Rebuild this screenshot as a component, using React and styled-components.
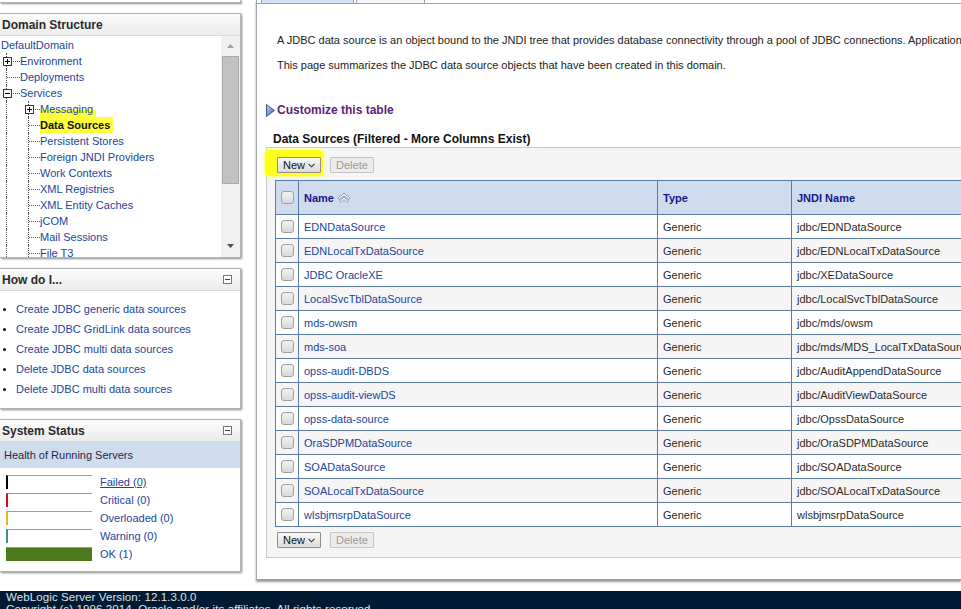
import React from 'react';
import styled, { createGlobalStyle } from 'styled-components';

const GlobalStyle = createGlobalStyle`
  html, body {
    margin: 0;
    padding: 0;
    background: #ffffff;
  }
  body {
    font-family: "Liberation Sans", Arial, sans-serif;
    font-size: 11px;
    color: #222;
  }
`;

// DATA //
const treeItems = [
  { label: 'DefaultDomain', level: 0 },
  { label: 'Environment', level: 1, toggle: '+' },
  { label: 'Deployments', level: 1 },
  { label: 'Services', level: 1, toggle: '-' },
  { label: 'Messaging', level: 2, toggle: '+', mark: 'low' },
  { label: 'Data Sources', level: 2, selected: true },
  { label: 'Persistent Stores', level: 2 },
  { label: 'Foreign JNDI Providers', level: 2 },
  { label: 'Work Contexts', level: 2 },
  { label: 'XML Registries', level: 2 },
  { label: 'XML Entity Caches', level: 2 },
  { label: 'jCOM', level: 2 },
  { label: 'Mail Sessions', level: 2 },
  { label: 'File T3', level: 2 },
];

const howItems = [
  'Create JDBC generic data sources',
  'Create JDBC GridLink data sources',
  'Create JDBC multi data sources',
  'Delete JDBC data sources',
  'Delete JDBC multi data sources',
];

const health = [
  { label: 'Failed (0)', color: '#000000', underline: true },
  { label: 'Critical (0)', color: '#d01010' },
  { label: 'Overloaded (0)', color: '#f0b020' },
  { label: 'Warning (0)', color: '#3a8aa0' },
  { label: 'OK (1)', color: '#4e7a1e', full: true },
];

const sources = [
  ['EDNDataSource', 'jdbc/EDNDataSource'],
  ['EDNLocalTxDataSource', 'jdbc/EDNLocalTxDataSource'],
  ['JDBC OracleXE', 'jdbc/XEDataSource'],
  ['LocalSvcTblDataSource', 'jdbc/LocalSvcTblDataSource'],
  ['mds-owsm', 'jdbc/mds/owsm'],
  ['mds-soa', 'jdbc/mds/MDS_LocalTxDataSource'],
  ['opss-audit-DBDS', 'jdbc/AuditAppendDataSource'],
  ['opss-audit-viewDS', 'jdbc/AuditViewDataSource'],
  ['opss-data-source', 'jdbc/OpssDataSource'],
  ['OraSDPMDataSource', 'jdbc/OraSDPMDataSource'],
  ['SOADataSource', 'jdbc/SOADataSource'],
  ['SOALocalTxDataSource', 'jdbc/SOALocalTxDataSource'],
  ['wlsbjmsrpDataSource', 'wlsbjmsrpDataSource'],
];

// ICONS //
const ToggleIcon = ({ sign }) => (
  <svg width="9" height="9" viewBox="0 0 9 9">
    <rect x="0.5" y="0.5" width="8" height="8" fill="#fff" stroke="#333" />
    <line x1="2" y1="4.5" x2="7" y2="4.5" stroke="#000" />
    {sign === '+' && <line x1="4.5" y1="2" x2="4.5" y2="7" stroke="#000" />}
  </svg>
);

const CollapseIcon = () => (
  <svg width="9" height="9" viewBox="0 0 9 9">
    <rect x="0.5" y="0.5" width="8" height="8" fill="#fff" stroke="#777" />
    <line x1="2" y1="4.5" x2="7" y2="4.5" stroke="#444" />
  </svg>
);

const SortIcon = () => (
  <svg width="14" height="11" viewBox="0 0 14 11">
    <polygon points="1,6 7,1 13,6 11.5,7.5 7,3.5 2.5,7.5" fill="#eef2fa" stroke="#7a8cb0" strokeWidth="0.8" />
    <polygon points="2.5,9 7,5 11.5,9 10,10.3 7,7.6 4,10.3" fill="#eef2fa" stroke="#7a8cb0" strokeWidth="0.8" />
  </svg>
);

const CustomizeIcon = () => (
  <svg width="9" height="13" viewBox="0 0 9 13">
    <defs>
      <linearGradient id="tri" x1="0" y1="0" x2="1" y2="1">
        <stop offset="0" stopColor="#c8d8f4" />
        <stop offset="1" stopColor="#2f5aa8" />
      </linearGradient>
    </defs>
    <polygon points="0.5,0.5 8.5,6.5 0.5,12.5" fill="url(#tri)" stroke="#3a5a9a" />
  </svg>
);

const Caret = () => (
  <svg width="7" height="5" viewBox="0 0 7 5">
    <polyline points="0.5,0.8 3.5,3.8 6.5,0.8" fill="none" stroke="#333" strokeWidth="1.1" />
  </svg>
);

const ArrowIcon = ({ up }) => (
  <svg width="7" height="4" viewBox="0 0 7 4">
    <polygon points={up ? '0,4 3.5,0 7,4' : '0,0 3.5,4 7,0'} fill={up ? '#a0a0a0' : '#505050'} />
  </svg>
);

// COMPONENTS //
const TreeRow = ({ item }) => (
  <Row>
    {item.level === 2 && <Guide />}
    {item.level > 0 && (
      <Connector $level={item.level}>
        {item.toggle && (
          <ToggleBox>
            <ToggleIcon sign={item.toggle} />
          </ToggleBox>
        )}
      </Connector>
    )}
    <TreeLabel $selected={item.selected} $mark={item.mark} $root={item.level === 0}>
      {item.label}
    </TreeLabel>
  </Row>
);

const NewButton = () => (
  <Button>
    New <Caret />
  </Button>
);

const App = () => {
  return (
    <Page>
      <GlobalStyle />
      <Body>
        <SideColumn>
          <StubPanel />

          <Panel>
            <PanelHeader>Domain Structure</PanelHeader>
            <TreeArea>
              <Tree>
                {treeItems.map((item) => (
                  <TreeRow key={item.label} item={item} />
                ))}
              </Tree>
              <ScrollBar>
                <ScrollArrow>
                  <ArrowIcon up />
                </ScrollArrow>
                <ScrollThumb />
                <ScrollSpacer />
                <ScrollArrow>
                  <ArrowIcon />
                </ScrollArrow>
              </ScrollBar>
            </TreeArea>
          </Panel>

          <Panel>
            <PanelHeader>
              How do I...
              <CollapseIcon />
            </PanelHeader>
            <HowList>
              {howItems.map((text) => (
                <HowItem key={text}>
                  <Link>{text}</Link>
                </HowItem>
              ))}
            </HowList>
          </Panel>

          <Panel>
            <PanelHeader>
              System Status
              <CollapseIcon />
            </PanelHeader>
            <HealthBand>Health of Running Servers</HealthBand>
            <HealthList>
              {health.map((h) => (
                <HealthRow key={h.label}>
                  <HealthBar $color={h.color} $full={h.full} />
                  <HealthLabel $underline={h.underline}>{h.label}</HealthLabel>
                </HealthRow>
              ))}
            </HealthList>
          </Panel>
        </SideColumn>

        <MainPanel>
          <TabStrip>
            <Tab $active />
            <Tab />
          </TabStrip>

          <MainContent>
            <Intro>
              A JDBC data source is an object bound to the JNDI tree that provides database connectivity through a pool of JDBC connections. Applications can look up a data source on the JNDI tree and then borrow a database connection from a data source.
            </Intro>
            <Intro $second>
              This page summarizes the JDBC data source objects that have been created in this domain.
            </Intro>

            <Customize>
              <CustomizeIcon />
              Customize this table
            </Customize>

            <TableTitle>Data Sources (Filtered - More Columns Exist)</TableTitle>

            <TableBox>
              <Toolbar>
                <Marker>
                  <NewButton />
                </Marker>
                <Button disabled>Delete</Button>
              </Toolbar>

              <Table>
                <colgroup>
                  <col style={{ width: 23 }} />
                  <col style={{ width: 359 }} />
                  <col style={{ width: 134 }} />
                  <col style={{ width: 260 }} />
                </colgroup>
                <thead>
                  <tr>
                    <HeadCell $check>
                      <CheckBox />
                    </HeadCell>
                    <HeadCell>
                      <HeadName>
                        Name <SortIcon />
                      </HeadName>
                    </HeadCell>
                    <HeadCell>Type</HeadCell>
                    <HeadCell>JNDI Name</HeadCell>
                  </tr>
                </thead>
                <tbody>
                  {sources.map(([name, jndi], i) => (
                    <BodyRow key={name} $alt={i % 2 === 1}>
                      <Cell $check>
                        <CheckBox />
                      </Cell>
                      <Cell>
                        <Link>{name}</Link>
                      </Cell>
                      <Cell>Generic</Cell>
                      <Cell>{jndi}</Cell>
                    </BodyRow>
                  ))}
                </tbody>
              </Table>

              <Toolbar $bottom>
                <NewButton />
                <Button disabled>Delete</Button>
              </Toolbar>
            </TableBox>
          </MainContent>
        </MainPanel>
      </Body>

      <Footer>
        <FooterLine>WebLogic Server Version: 12.1.3.0.0</FooterLine>
        <FooterLine>Copyright (c) 1996,2014, Oracle and/or its affiliates. All rights reserved.</FooterLine>
      </Footer>
    </Page>
  );
};

export default App;

// GENERAL STYLES //
//
const Page = styled.div`
  width: 961px;
  height: 609px;
  overflow: hidden;
  display: flex;
  flex-direction: column;
`;

const Body = styled.div`
  height: 591px;
  flex: none;
  display: flex;
  align-items: flex-start;
`;

const SideColumn = styled.div`
  width: 241px;
  flex: none;
  display: flex;
  flex-direction: column;
  gap: 10px;
`;

const StubPanel = styled.div`
  height: 2px;
  border: 1px solid #b4b4b4;
  border-top: none;
  border-left: none;
  box-shadow: 1px 1px 2px #8a8a8a;
`;

const Panel = styled.div`
  border: 1px solid #b4b4b4;
  border-left: none;
  background: #fff;
  box-shadow: 1px 1px 2px #8a8a8a;
`;

const PanelHeader = styled.div`
  height: 21px;
  padding: 0 8px 0 2px;
  display: flex;
  align-items: center;
  justify-content: space-between;
  background: linear-gradient(#fbfbfb, #ececec);
  border-bottom: 1px solid #dadada;
  font-size: 12px;
  font-weight: bold;
  color: #2a2a2a;
`;

// DOMAIN TREE //
const TreeArea = styled.div`
  height: 221px;
  display: flex;
  overflow: hidden;
`;

const Tree = styled.div`
  flex: 1;
  padding-top: 1px;
`;

const Row = styled.div`
  height: 16px;
  display: flex;
  align-items: stretch;
  padding-left: 6px;
`;

const Guide = styled.span`
  width: 21px;
  flex: none;
  border-left: 1px dotted #555;
`;

const Connector = styled.span`
  position: relative;
  width: ${(p) => (p.$level === 1 ? 13 : 11)}px;
  flex: none;
  border-left: 1px dotted #555;
  background: linear-gradient(to right, #555 50%, transparent 50%) 0 8px / 2px 1px repeat-x;
`;

const ToggleBox = styled.span`
  position: absolute;
  left: -4px;
  top: 4px;
  line-height: 0;
`;

const TreeLabel = styled.span`
  margin-left: ${(p) => (p.$root ? '-5px' : '0')};
  line-height: 16px;
  white-space: nowrap;
  color: ${(p) => (p.$selected ? '#111' : '#22459a')};
  font-weight: ${(p) => (p.$selected ? 'bold' : 'normal')};
  background: ${(p) =>
    p.$selected
      ? '#ffff3a'
      : p.$mark
      ? 'linear-gradient(transparent 55%, #ffff3a 55%)'
      : 'transparent'};
  padding: 0 3px 0 0;
`;

const ScrollBar = styled.div`
  width: 19px;
  flex: none;
  background: #f0f0f0;
  display: flex;
  flex-direction: column;
  align-items: center;
  padding-bottom: 2px;
`;

const ScrollArrow = styled.div`
  height: 19px;
  display: flex;
  align-items: center;
  justify-content: center;
  line-height: 0;
`;

const ScrollThumb = styled.div`
  width: 15px;
  height: 126px;
  margin-top: 1px;
  background: #c1c1c1;
  border: 1px solid #a8a8a8;
`;

const ScrollSpacer = styled.div`
  flex: 1;
`;

// HOW DO I //
const HowList = styled.ul`
  box-sizing: border-box;
  margin: 0;
  height: 117px;
  padding: 8px 0 0 16px;
  list-style: disc;
`;

const HowItem = styled.li`
  height: 20px;
  line-height: 20px;
  font-size: 11px;
  &::marker {
    color: #111;
    font-size: 10px;
  }
`;

const Link = styled.span`
  color: #22459a;
`;

// SYSTEM STATUS //
const HealthBand = styled.div`
  height: 26px;
  line-height: 26px;
  padding-left: 4px;
  background: #cfdcee;
  color: #1c2b45;
  font-size: 11px;
`;

const HealthList = styled.div`
  padding: 5px 0 8px 6px;
`;

const HealthRow = styled.div`
  height: 18px;
  display: flex;
  align-items: center;
  gap: 8px;
`;

const HealthBar = styled.span`
  width: 86px;
  height: 14px;
  box-sizing: border-box;
  background: ${(p) => (p.$full ? p.$color : '#fff')};
  border-top: 1px solid #9c9c9c;
  border-left: 2px solid ${(p) => p.$color};
`;

const HealthLabel = styled.span`
  color: #22459a;
  text-decoration: ${(p) => (p.$underline ? 'underline' : 'none')};
`;

// MAIN AREA //
const MainPanel = styled.div`
  flex: 1;
  margin-left: 15px;
  height: 579px;
  border-left: 1px solid #a6a6a6;
  border-bottom: 1px solid #a0a0a0;
  box-shadow: 0 2px 2px #9a9a9a;
  overflow: hidden;
  background: #fff;
`;

const TabStrip = styled.div`
  height: 3px;
  border-bottom: 1px solid #8fa5c0;
  display: flex;
  gap: 2px;
  padding-left: 4px;
`;

const Tab = styled.div`
  width: ${(p) => (p.$active ? 91 : 67)}px;
  background: ${(p) => (p.$active ? '#d6e2f2' : '#f6f6f6')};
  border-left: 1px solid #8fa5c0;
  border-right: 1px solid #8fa5c0;
`;

const MainContent = styled.div`
  padding: 29px 0 0 9px;
  width: 1000px;
`;

const Intro = styled.p`
  margin: ${(p) => (p.$second ? '11px' : '0')} 0 0 11px;
  line-height: 14px;
  white-space: nowrap;
  color: #222;
`;

const Customize = styled.div`
  margin-top: 30px;
  height: 16px;
  display: flex;
  align-items: center;
  gap: 2px;
  font-size: 12px;
  font-weight: bold;
  color: #5c1f7a;
`;

const TableTitle = styled.div`
  margin: 13px 0 0 7px;
  line-height: 16px;
  font-size: 12px;
  font-weight: bold;
  color: #111;
`;

const TableBox = styled.div`
  border: 1px solid #c8c8c8;
  border-right: none;
  background: #f5f5f5;
  padding: 9px 0 9px 8px;
`;

const Toolbar = styled.div`
  display: flex;
  align-items: center;
  gap: 9px;
  padding-left: 2px;
  margin: ${(p) => (p.$bottom ? '5px 0 0' : '0 0 7px')};
`;

const Marker = styled.span`
  display: inline-flex;
  margin: -7px -2px -3px -12px;
  padding: 7px 2px 3px 12px;
  background: #ffff1e;
  border-radius: 4px;
  box-shadow: 0 0 3px 1px #ffff66;
`;

const Button = styled.button`
  height: 16px;
  padding: 0 5px;
  display: inline-flex;
  align-items: center;
  gap: 3px;
  font-family: "Liberation Sans", Arial, sans-serif;
  font-size: 11px;
  color: ${(p) => (p.disabled ? '#9a9a9a' : '#111')};
  background: ${(p) => (p.disabled ? '#ececec' : 'linear-gradient(#f8f8f8, #dcdcdc)')};
  border: 1px solid ${(p) => (p.disabled ? '#c4c4c4' : '#8e8e8e')};
  border-radius: 1px;
`;

const Table = styled.table`
  border-collapse: collapse;
  table-layout: fixed;
  width: 776px;
  border: 1px solid #5b7ba3;
`;

const HeadCell = styled.th`
  height: 33px;
  padding: 0 ${(p) => (p.$check ? '0' : '5px')};
  text-align: ${(p) => (p.$check ? 'center' : 'left')};
  background: #cfdcee;
  border: 1px solid #5b7ba3;
  font-size: 11px;
  font-weight: bold;
  color: #15168a;
`;

const HeadName = styled.span`
  display: inline-flex;
  align-items: center;
  gap: 3px;
`;

const BodyRow = styled.tr`
  background: ${(p) => (p.$alt ? '#f5f5f5' : '#fff')};
`;

const Cell = styled.td`
  height: 23px;
  padding: 0 ${(p) => (p.$check ? '0' : '5px')};
  text-align: ${(p) => (p.$check ? 'center' : 'left')};
  border: 1px solid #5b7ba3;
  color: #2a2a2a;
  white-space: nowrap;
  overflow: hidden;
`;

const CheckBox = styled.span`
  display: inline-block;
  vertical-align: middle;
  width: 11px;
  height: 11px;
  border: 1px solid #a0a0a0;
  border-radius: 3px;
  background: linear-gradient(#f2f2f2, #d8d8d8);
`;

// FOOTER //
const Footer = styled.div`
  flex: 1;
  background: #001a33;
  padding: 0 0 0 6px;
`;

const FooterLine = styled.div`
  line-height: 12px;
  font-size: 11.5px;
  letter-spacing: 0.1px;
  color: #dde3ea;
  white-space: nowrap;
`;
